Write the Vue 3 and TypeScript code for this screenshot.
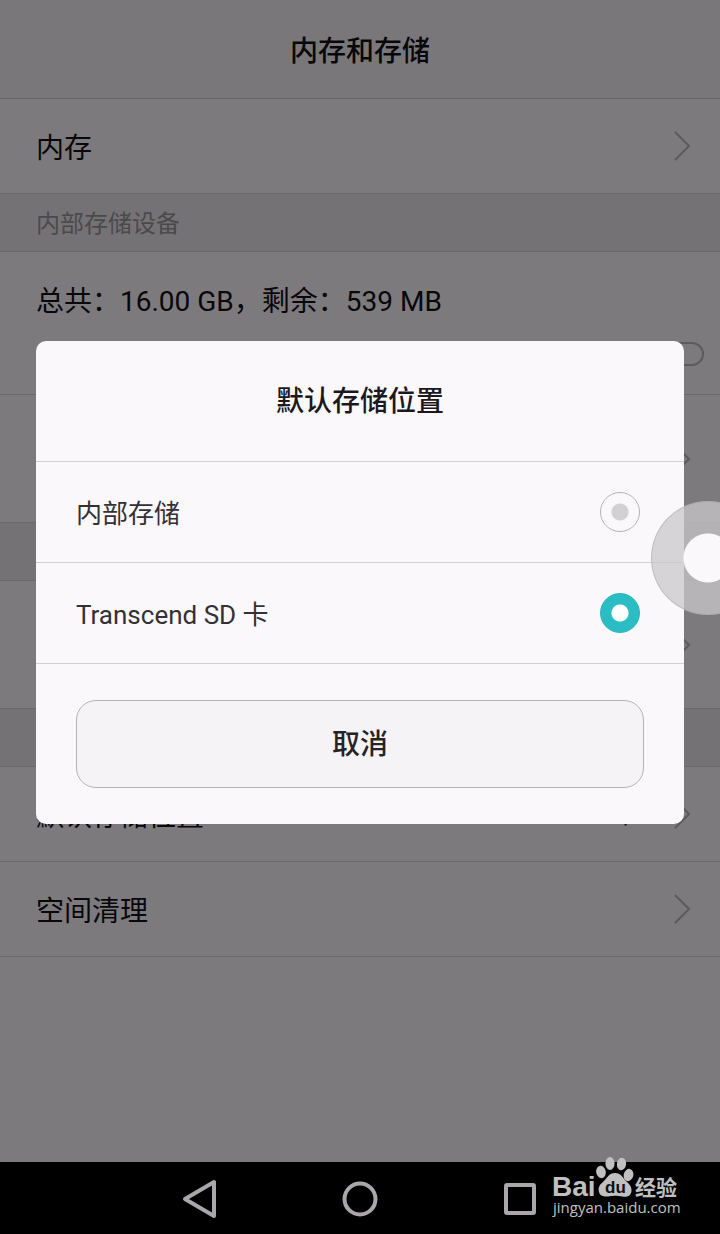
<script setup lang="ts">
import { ref } from 'vue'

interface StorageOption {
  id: string
  label: string
}

const options: StorageOption[] = [
  { id: 'internal', label: '内部存储' },
  { id: 'sd', label: 'Transcend SD 卡' },
]
const selected = ref('sd')
</script>

<template>
  <div class="screen">
    <main class="settings">
      <header class="bar"><h1>内存和存储</h1></header>
      <a class="row" href="#memory">
        <span>内存</span>
        <svg class="chevron" viewBox="0 0 16 30"><path d="M1 1L15 15L1 29" /></svg>
      </a>
      <h2 class="section">内部存储设备</h2>
      <div class="usage">
        <p>总共：16.00 GB，剩余：539 MB</p>
        <div class="track"></div>
      </div>
      <a class="row tall" href="#internal" aria-label="内部存储">
        <svg class="chevron" viewBox="0 0 16 30"><path d="M1 1L15 15L1 29" /></svg>
      </a>
      <div class="section"></div>
      <a class="row tall" href="#sd" aria-label="SD 卡">
        <svg class="chevron" viewBox="0 0 16 30"><path d="M1 1L15 15L1 29" /></svg>
      </a>
      <div class="section"></div>
      <a class="row" href="#default">
        <span>默认存储位置</span>
        <span class="value">Transcend SD 卡</span>
        <svg class="chevron" viewBox="0 0 16 30"><path d="M1 1L15 15L1 29" /></svg>
      </a>
      <a class="row" href="#clean">
        <span>空间清理</span>
        <svg class="chevron" viewBox="0 0 16 30"><path d="M1 1L15 15L1 29" /></svg>
      </a>

      <div class="overlay">
        <section class="dialog" role="dialog" aria-labelledby="dialog-title">
          <h2 id="dialog-title" class="dialog-title">默认存储位置</h2>
          <label v-for="o in options" :key="o.id" class="option" :for="o.id">
            <span>{{ o.label }}</span>
            <input :id="o.id" v-model="selected" type="radio" name="storage" :value="o.id" />
          </label>
          <div class="actions"><button class="cancel" type="button">取消</button></div>
        </section>
      </div>
      <button class="assist" type="button" aria-label="悬浮按钮"></button>
    </main>

    <nav class="nav">
      <button type="button" aria-label="返回">
        <svg viewBox="0 0 40 40"><path d="M34 4V38L5 21Z" /></svg>
      </button>
      <button type="button" aria-label="主页">
        <svg viewBox="0 0 40 40"><circle cx="20" cy="21" r="15.5" /></svg>
      </button>
      <button type="button" aria-label="最近">
        <svg viewBox="0 0 40 40"><rect x="6" y="7" width="28" height="28" rx="1" /></svg>
      </button>
    </nav>

    <svg class="mark" viewBox="0 0 130 64">
      <text class="bai" x="0" y="40">Bai</text>
      <ellipse cx="49" cy="16" rx="4.8" ry="6.2" transform="rotate(-12 49 16)" />
      <ellipse cx="58" cy="7.5" rx="4.6" ry="6.4" />
      <ellipse cx="69.500" cy="8" rx="4.6" ry="6.2" transform="rotate(8 69.5 8)" />
      <ellipse cx="76.500" cy="19" rx="4.8" ry="6.2" transform="rotate(14 76.5 19)" />
      <path d="M63 17C57 17 55 22 51 26C47 29 46 32 47 36C48 40 52 41 56 40.5C61 39.5 66 39.5 70 40.5C75 41.5 79 40 79.500 35C80 30 76 27 73 24C70 20 68 17 63 17Z" />
      <text class="du" x="53" y="37">du</text>
      <text class="jy" x="83" y="39">经验</text>
      <text class="url" x="1" y="57">jingyan.baidu.com</text>
    </svg>
  </div>
</template>

<style>
body {
  margin: 0;
  background: #7d7a7d;
}
</style>

<style scoped>
.screen {
  position: relative;
  display: flex;
  flex-direction: column;
  min-height: 100vh;
  overflow: hidden;
  background: #7d7a7d;
  color: #08070a;
  font-family: Roboto, "Noto Sans CJK SC", sans-serif;
  font-size: 28px;
  line-height: 40px;
}
* {
  box-sizing: border-box;
}
h1,
h2,
p {
  margin: 0;
  font-size: inherit;
  font-weight: 400;
}
.settings {
  position: relative;
  flex: 1;
}
.bar {
  display: flex;
  align-items: center;
  justify-content: center;
  height: 99px;
  padding-top: 6px;
  border-bottom: 1px solid #656366;
  background: #7a777a;
}
.bar h1 {
  font-weight: 500;
}
.row {
  display: flex;
  align-items: center;
  height: 95px;
  padding: 0 30px 0 36px;
  border-bottom: 1px solid #6a686b;
  color: inherit;
  text-decoration: none;
}
.row span {
  padding-top: 6px;
}
.tall {
  height: 128px;
}
.row .value {
  margin-left: auto;
  padding-top: 2px;
  font-size: 24px;
}
.chevron {
  width: 16px;
  height: 30px;
  margin-left: auto;
  fill: none;
  stroke: #5c5a5d;
  stroke-width: 2;
}
.value + .chevron {
  margin-left: 36px;
}
.section {
  height: 58px;
  padding: 2px 36px 0;
  border-bottom: 1px solid #6a686b;
  background: #757275;
  color: #4b494c;
  font-size: 24px;
  line-height: 56px;
}
.usage {
  height: 143px;
  padding: 30px 16px 0 36px;
  border-bottom: 1px solid #6a686b;
}
.track {
  height: 24px;
  margin-top: 20px;
  border: 2px solid #5c5a5d;
  border-radius: 12px;
}
.overlay {
  position: absolute;
  inset: 0;
  display: flex;
  align-items: center;
  padding: 3px 36px 0;
}
.dialog {
  flex: 1;
  border-radius: 10px;
  background: #faf8fb;
  color: #333135;
}
.dialog-title {
  display: flex;
  align-items: center;
  justify-content: center;
  height: 121px;
  padding-top: 2px;
  border-bottom: 1px solid #d2d0d3;
  color: #1b191d;
  font-weight: 500;
}
.option {
  display: flex;
  align-items: center;
  justify-content: space-between;
  height: 101px;
  padding: 0 44px 0 40px;
  border-bottom: 1px solid #d2d0d3;
  font-size: 26px;
}
.option span {
  padding-top: 3px;
}
.option input {
  appearance: none;
  width: 40px;
  height: 40px;
  margin: 0;
  border: 1px solid #b5b3b6;
  border-radius: 50%;
  background: radial-gradient(circle, #d2d0d3 8px, transparent 9px);
}
.option input:checked {
  border-color: #2bb5bc;
  background: radial-gradient(circle, #fff 8px, #2bbdc4 9px);
}
.actions {
  padding: 36px 40px;
}
.cancel {
  display: block;
  width: 100%;
  height: 88px;
  padding: 2px 0 0;
  border: 1px solid #b5b3b6;
  border-radius: 20px;
  background: #f5f3f6;
  color: #252327;
  font: inherit;
  font-weight: 500;
}
.assist {
  position: absolute;
  top: 501px;
  right: -45px;
  width: 114px;
  height: 114px;
  padding: 0;
  border: 1px solid rgba(165, 163, 166, 0.5);
  border-radius: 50%;
  background: radial-gradient(circle, #faf8fb 24px, rgba(202, 200, 203, 0.75) 25px);
}
.nav {
  display: flex;
  justify-content: center;
  height: 72px;
  background: #000;
}
.nav button {
  display: flex;
  align-items: center;
  justify-content: center;
  width: 160px;
  padding: 0;
  border: 0;
  background: none;
}
.nav svg {
  width: 40px;
  height: 40px;
  fill: none;
  stroke: #a9a7aa;
  stroke-width: 4;
  stroke-linejoin: round;
}
.mark {
  position: absolute;
  right: 38px;
  bottom: 14px;
  width: 130px;
  height: 64px;
  fill: #c0c0c0;
}
.bai {
  font: 700 28px "Liberation Sans", sans-serif;
}
.du {
  fill: #111;
  font: 700 17px "Liberation Sans", sans-serif;
}
.jy {
  font: 700 21px "Noto Sans CJK SC", sans-serif;
}
.url {
  font: 400 15px "Open Sans", sans-serif;
}
</style>
